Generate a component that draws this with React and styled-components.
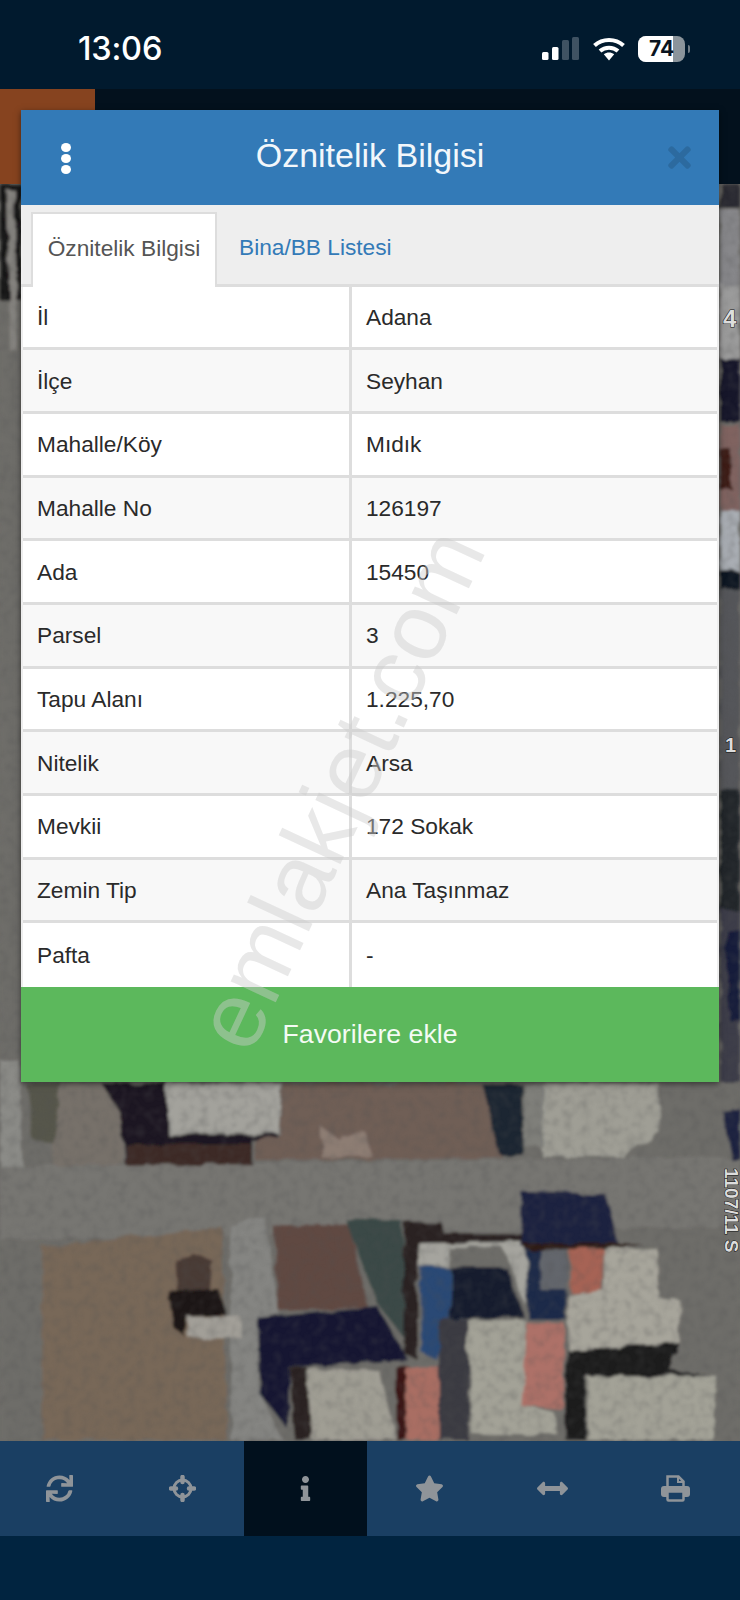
import React from 'react';
import styled, { createGlobalStyle } from 'styled-components';
import { FaSync, FaInfo, FaStar, FaArrowsAltH, FaTimes } from 'react-icons/fa';

const GlobalStyle = createGlobalStyle`
  html, body {
    margin: 0;
    padding: 0;
    background: #012440;
  }
  * {
    box-sizing: border-box;
  }
`;

const Page = styled.div`
  position: relative;
  width: 740px;
  height: 1600px;
  display: flex;
  flex-direction: column;
  overflow: hidden;
  background: #012440;
  font-family: "Liberation Sans", Arial, sans-serif;
`;

const StatusBar = styled.div`
  height: 89px;
  flex: none;
  display: flex;
  align-items: center;
  justify-content: space-between;
  padding: 0 50px 0 78px;
  background: #011a2e;
`;

const Time = styled.span`
  font-family: Inter, sans-serif;
  font-size: 32.5px;
  font-weight: 500;
  letter-spacing: -0.2px;
  color: #fff;
  margin-top: 8px;
`;

const StatusIcons = styled.div`
  display: flex;
  align-items: center;
  gap: 13px;
  margin-top: 8px;
`;

const Battery = styled.div`
  position: relative;
  width: 47px;
  height: 26px;
  border-radius: 8px;
  overflow: hidden;
  background: #8b949b;
  display: flex;
  align-items: center;
  justify-content: center;
  margin-right: 5px;
  &::before {
    content: '';
    position: absolute;
    left: 0;
    top: 0;
    bottom: 0;
    width: 35px;
    background: #fff;
  }
`;

const BatteryText = styled.span`
  position: relative;
  font-family: Inter, sans-serif;
  font-size: 21px;
  font-weight: 700;
  color: #0a1420;
`;

const BatteryWrap = styled.div`
  position: relative;
  &::after {
    content: '';
    position: absolute;
    right: 0;
    top: 9px;
    width: 2px;
    height: 8px;
    border-radius: 0 2px 2px 0;
    background: #6f7b85;
  }
`;

const TopBand = styled.div`
  height: 95px;
  flex: none;
  display: flex;
  background: #03111d;
`;

const OrangeBlock = styled.div`
  width: 95px;
  background: #86431f;
`;

const MapArea = styled.div`
  position: relative;
  flex: 1;
  background: #6e6d69;
`;

const MapImage = styled.svg`
  position: absolute;
  left: 0;
  top: 0;
  display: block;
`;

const Modal = styled.div`
  position: absolute;
  left: 21px;
  top: -74px;
  width: 698px;
  background: #fff;
  box-shadow: 0 2px 6px rgba(0, 0, 0, 0.5);
`;

const ModalHeader = styled.div`
  height: 94.5px;
  display: flex;
  align-items: center;
  justify-content: space-between;
  padding: 0 23px 0 40px;
  background: #337ab7;
`;

const Dots = styled.div`
  display: flex;
  flex-direction: column;
  gap: 2px;
  margin-top: 2px;
`;

const Dot = styled.span`
  width: 10px;
  height: 9px;
  border-radius: 50%;
  background: #fff;
`;

const ModalTitle = styled.h1`
  margin: 0 0 3px 6px;
  font-size: 34px;
  font-weight: 400;
  color: #f2f7fb;
`;

const CloseButton = styled.span`
  display: flex;
  font-size: 33px;
  color: #2c6a9f;
`;

const Tabs = styled.div`
  height: 82px;
  display: flex;
  padding: 7px 0 0 10px;
  background: #eee;
  border-bottom: 3px solid #ddd;
`;

const Tab = styled.div`
  width: ${(p) => (p.$active ? '186px' : 'auto')};
  height: ${(p) => (p.$active ? '75px' : 'auto')};
  display: flex;
  align-items: center;
  justify-content: center;
  padding: ${(p) => (p.$active ? '0 0 4px' : '0 0 0 22px')};
  font-size: 22.7px;
  color: ${(p) => (p.$active ? '#555' : '#337ab7')};
  background: ${(p) => (p.$active ? '#fff' : 'transparent')};
  border: ${(p) => (p.$active ? '2px solid #ddd' : 'none')};
  border-bottom: none;
`;

const Table = styled.div`
  display: flex;
  flex-direction: column;
  padding: 0 2px;
  background: #eee;
`;

const Row = styled.div`
  display: grid;
  grid-template-columns: 326px 1fr;
  height: 63.7px;
  background: ${(p) => (p.$striped ? '#f8f8f8' : '#fff')};
  border-bottom: ${(p) => (p.$last ? 'none' : '3px solid #ddd')};
`;

const Cell = styled.div`
  display: flex;
  align-items: center;
  padding: 1px 0 0 14px;
  font-size: 22.7px;
  color: #2a2a2a;
  border-left: ${(p) => (p.$value ? '3px solid #ddd' : 'none')};
`;

const FavoriteButton = styled.div`
  height: 95px;
  display: flex;
  align-items: center;
  justify-content: center;
  font-size: 26.7px;
  color: #f4fbf4;
  background: #5cb85c;
`;

const Watermark = styled.div`
  position: absolute;
  left: 319px;
  top: 679px;
  transform: translate(-50%, -50%) rotate(-65deg);
  font-size: 94px;
  letter-spacing: 0.5px;
  white-space: nowrap;
  color: rgba(205, 205, 205, 0.45);
  pointer-events: none;
`;

const Toolbar = styled.div`
  height: 95px;
  flex: none;
  display: grid;
  grid-template-columns: repeat(6, 123.4px);
  margin-left: -2.7px;
  background: #1a3f63;
`;

const ToolButton = styled.div`
  display: flex;
  align-items: center;
  justify-content: center;
  font-size: ${(p) => p.$size || 28}px;
  color: #8f9499;
  background: ${(p) => (p.$active ? '#01101d' : 'transparent')};
`;

const BottomBar = styled.div`
  height: 64px;
  flex: none;
  background: #012440;
`;

const rows = [
  ['İl', 'Adana'],
  ['İlçe', 'Seyhan'],
  ['Mahalle/Köy', 'Mıdık'],
  ['Mahalle No', '126197'],
  ['Ada', '15450'],
  ['Parsel', '3'],
  ['Tapu Alanı', '1.225,70'],
  ['Nitelik', 'Arsa'],
  ['Mevkii', '172 Sokak'],
  ['Zemin Tip', 'Ana Taşınmaz'],
  ['Pafta', '-'],
];

// lower part of the aerial photo, coordinates read from the 2.12 x 3 zoom crop
const lowerShapes = [
  ['#8b8b87', '0,0 40,0 48,350 0,340'],
  ['#57574c', '55,70 130,70 125,250 70,240'],
  ['#77716a', '130,70 255,70 260,310 120,360 110,260'],
  ['#1c1922', '215,70 355,70 355,225 560,225 565,165 588,165 588,235 532,240 532,312 265,316 255,160'],
  ['#3d2a26', '265,255 530,250 530,312 265,316'],
  ['#a3a29c', '355,70 597,70 590,220 355,222'],
  ['#6f5e56', '600,70 1040,70 1065,295 540,300 540,240 590,232'],
  ['#8d7d73', '680,200 720,240 770,210 790,290 680,290'],
  ['#1e2830', '1020,70 1105,70 1110,285 1060,285'],
  ['#9f9e95', '1110,70 1395,70 1400,220 1320,290 1150,290'],
  ['#7f7f7a', '1110,70 1150,70 1150,260 1110,260'],
  ['#777672', '0,320 1568,290 1568,500 0,540'],
  ['#786858', '90,560 470,500 482,1140 90,1140'],
  ['#858582', '490,500 560,470 590,760 545,770 550,1000 600,1140 490,1140'],
  ['#4a3a36', '372,610 405,575 450,600 445,690 375,690'],
  ['#1d1718', '355,692 465,690 480,765 400,770 392,830 365,800'],
  ['#a29f98', '400,770 510,770 510,835 400,835'],
  ['#604842', '580,500 740,490 780,740 590,750'],
  ['#3b4a46', '730,475 850,480 870,860 800,730'],
  ['#121832', '547,770 800,738 865,900 612,922 612,1110 552,1005'],
  ['#2a2420', '612,922 650,922 660,1140 625,1140'],
  ['#a09e94', '652,930 802,930 840,1140 660,1140'],
  ['#3a1518', '840,920 865,915 860,1140 840,1140'],
  ['#a96e64', '860,920 932,920 932,1140 860,1140'],
  ['#2b2120', '855,485 935,485 940,520 1100,520 1130,545 885,550 885,900 855,880'],
  ['#a5a49e', '885,550 1130,545 1115,740 1065,560 950,560 950,620 885,620'],
  ['#2c4a75', '890,620 955,625 955,780 925,900 895,880'],
  ['#141a2e', '955,625 1075,625 1110,770 955,780'],
  ['#3a3a42', '930,780 990,780 995,1140 930,1140'],
  ['#a3a297', '990,780 1115,780 1120,1040 1175,1060 1180,1122 1000,1122'],
  ['#ad7168', '1118,790 1195,790 1195,1050 1105,1038'],
  ['#1f2a48', '1115,560 1200,565 1200,780 1120,780'],
  ['#63666c', '1145,565 1200,565 1200,690 1145,690'],
  ['#1d2340', '1105,395 1285,405 1310,550 1105,560'],
  ['#2d1c18', '1105,550 1360,550 1300,565 1115,570'],
  ['#a66455', '1205,567 1280,567 1275,695 1210,700'],
  ['#a7a59b', '1280,565 1392,565 1395,712 1440,720 1440,850 1205,872 1205,705 1280,690'],
  ['#1c1a1f', '1200,870 1440,850 1420,930 1500,945 1240,950 1240,1140 1200,1140'],
  ['#a3a297', '1245,950 1520,950 1510,1140 1245,1140'],
  ['#1b2240', '1530,150 1568,140 1568,300 1550,300'],
];

// what shows beside the dialog, in page coordinates
const sideShapes = [
  ['#181316', '0,184 22,184 22,300 0,300'],
  ['#85837f', '7,190 15,190 17,350 10,350'],
  ['#2a2a30', '720,184 740,184 740,210 720,210'],
  ['#87878a', '720,211 740,211 740,285 720,285'],
  ['#9b9b9b', '720,285 740,285 740,358 720,358'],
  ['#15162c', '720,358 740,358 740,422 720,422'],
  ['#806460', '720,425 740,425 740,510 720,510'],
  ['#3c1c18', '720,450 732,450 732,490 720,490'],
  ['#a9adb3', '720,510 740,510 740,570 720,570'],
  ['#101524', '720,570 740,570 740,590 720,590'],
  ['#55565a', '720,590 740,590 740,790 720,790'],
  ['#20262c', '720,790 740,790 740,910 720,910'],
  ['#3d3e48', '720,910 740,910 740,1082 720,1082'],
  ['#171c3a', '726,930 740,930 740,1020 728,1020'],
];

function MapPhoto() {
  return (
    <MapImage width="740" height="1257" viewBox="0 184 740 1257">
      <defs>
        <filter id="soft" x="0" y="0" width="100%" height="100%">
          <feTurbulence type="fractalNoise" baseFrequency="0.05" numOctaves="3" seed="7" result="noise" />
          <feDisplacementMap in="SourceGraphic" in2="noise" scale="8" result="rough" />
          <feGaussianBlur in="rough" stdDeviation="1.6" />
        </filter>
        <filter id="grain">
          <feTurbulence type="fractalNoise" baseFrequency="0.11" numOctaves="2" seed="4" />
          <feColorMatrix values="0 0 0 0 0.08  0 0 0 0 0.08  0 0 0 0 0.08  1.4 0 0 0 -0.6" />
          <feGaussianBlur stdDeviation="0.8" />
        </filter>
      </defs>
      <rect x="0" y="184" width="740" height="1257" fill="#6e6d69" />
      <g filter="url(#soft)">
        <rect x="0" y="184" width="740" height="1257" fill="#6e6d69" />
        {sideShapes.map(([fill, points]) => (
          <polygon key={points} fill={fill} points={points} />
        ))}
        <g transform="translate(0 1060) scale(0.4719 0.3333)">
          {lowerShapes.map(([fill, points]) => (
            <polygon key={points} fill={fill} points={points} />
          ))}
        </g>
      </g>
      <rect x="0" y="184" width="740" height="1257" filter="url(#grain)" opacity="0.4" />
      <g fontFamily="Liberation Sans, sans-serif" fontWeight="700" fill="#ddd" stroke="#111" strokeWidth="1" paintOrder="stroke">
        <text x="723" y="327" fontSize="24">4</text>
        <text x="725" y="752" fontSize="20">1</text>
        <text x="0" y="0" fontSize="19" transform="translate(725 1168) rotate(90)">1107/11 S</text>
      </g>
    </MapImage>
  );
}

function SignalIcon() {
  return (
    <svg width="38" height="24" viewBox="0 0 38 24">
      <rect x="0" y="15" width="6.5" height="8" rx="1.5" fill="#fff" />
      <rect x="10" y="10" width="6.5" height="13" rx="1.5" fill="#fff" />
      <rect x="20" y="3" width="7" height="20" rx="1.5" fill="#3f5262" />
      <rect x="30" y="0" width="7" height="23" rx="1.5" fill="#3f5262" />
    </svg>
  );
}

function WifiIcon() {
  return (
    <svg width="32" height="24" viewBox="0 0 32 24" fill="none">
      <path d="M1.5 8.5C9.5 1 22.5 1 30.5 8.5" stroke="#fff" strokeWidth="4" />
      <path d="M7 14C12 9.500 20 9.500 25 14" stroke="#fff" strokeWidth="4" />
      <path d="M10.800 17.300C14 14.800 18 14.800 21.200 17.300L16 23.500Z" fill="#fff" />
    </svg>
  );
}

function LocateIcon() {
  return (
    <svg width="27" height="27" viewBox="0 0 27 27" fill="none" stroke="currentColor">
      <circle cx="13.500" cy="13.500" r="8.500" strokeWidth="3" />
      <path d="M13.500 2v5M13.500 20v5M2 13.500h5M20 13.500h5" strokeWidth="4.500" strokeLinecap="round" />
    </svg>
  );
}

function PrinterIcon() {
  return (
    <svg width="29" height="27" viewBox="0 0 29 27" fill="none">
      <path d="M6.500 12V1.500h11l5 5V12" stroke="currentColor" strokeWidth="2.500" />
      <path d="M17 1.500V7h5.500" stroke="currentColor" strokeWidth="2" />
      <rect x="0" y="11" width="29" height="11" rx="3" fill="currentColor" />
      <rect x="6.500" y="16.500" width="16" height="9" rx="1" fill="#1a3f63" stroke="currentColor" strokeWidth="2.500" />
    </svg>
  );
}

const tools = [
  { icon: <FaSync />, size: 27 },
  { icon: <LocateIcon /> },
  { icon: <FaInfo />, size: 25, active: true },
  { icon: <FaStar />, size: 29 },
  { icon: <FaArrowsAltH />, size: 31 },
  { icon: <PrinterIcon /> },
];

export default function App() {
  return (
    <Page>
      <GlobalStyle />
      <StatusBar>
        <Time>13:06</Time>
        <StatusIcons>
          <SignalIcon />
          <WifiIcon />
          <BatteryWrap>
            <Battery>
              <BatteryText>74</BatteryText>
            </Battery>
          </BatteryWrap>
        </StatusIcons>
      </StatusBar>
      <TopBand>
        <OrangeBlock />
      </TopBand>
      <MapArea>
        <MapPhoto />
        <Modal>
          <ModalHeader>
            <Dots>
              <Dot />
              <Dot />
              <Dot />
            </Dots>
            <ModalTitle>Öznitelik Bilgisi</ModalTitle>
            <CloseButton>
              <FaTimes />
            </CloseButton>
          </ModalHeader>
          <Tabs>
            <Tab $active>Öznitelik Bilgisi</Tab>
            <Tab>Bina/BB Listesi</Tab>
          </Tabs>
          <Table>
            {rows.map(([label, value], i) => (
              <Row key={label} $striped={i % 2 === 1} $last={i === rows.length - 1}>
                <Cell>{label}</Cell>
                <Cell $value>{value}</Cell>
              </Row>
            ))}
          </Table>
          <FavoriteButton>Favorilere ekle</FavoriteButton>
          <Watermark>emlakjet.com</Watermark>
        </Modal>
      </MapArea>
      <Toolbar>
        {tools.map((tool, i) => (
          <ToolButton key={i} $active={tool.active} $size={tool.size}>
            {tool.icon}
          </ToolButton>
        ))}
      </Toolbar>
      <BottomBar />
    </Page>
  );
}
